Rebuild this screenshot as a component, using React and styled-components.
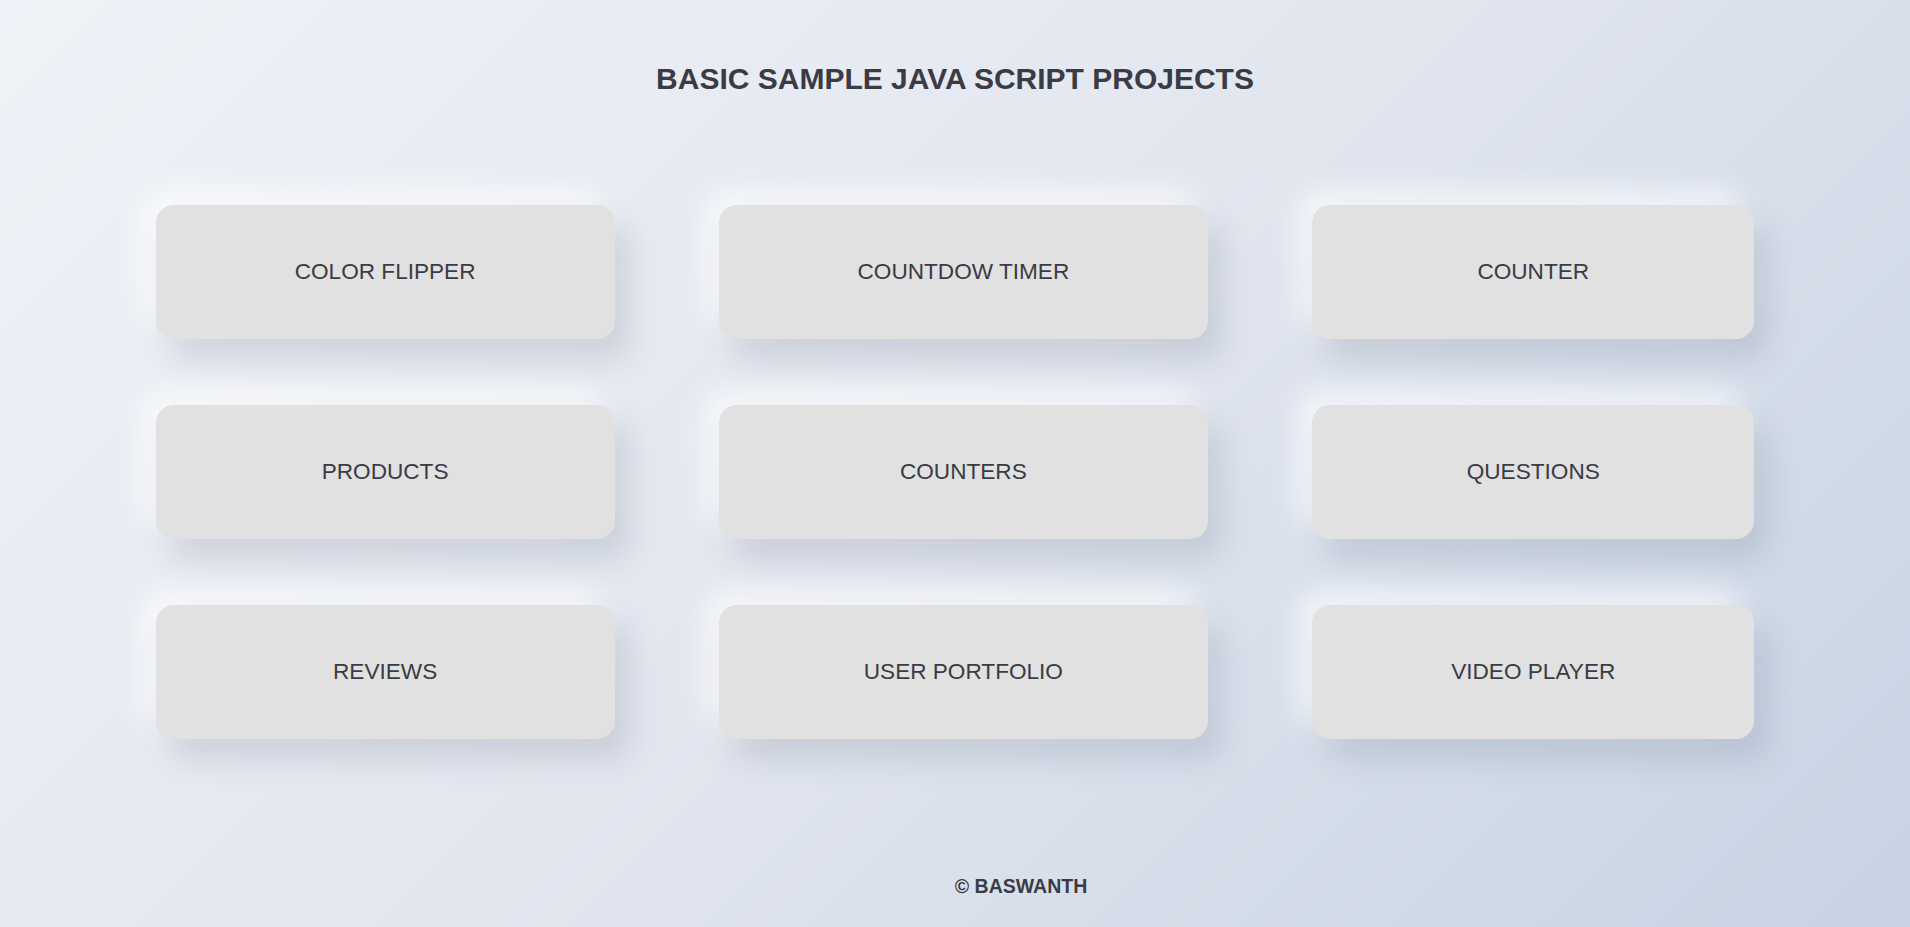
import React from 'react';
import styled, { createGlobalStyle } from 'styled-components';

const GlobalStyle = createGlobalStyle`
  html, body {
    margin: 0;
    padding: 0;
  }
  body {
    font-family: "Liberation Sans", Arial, sans-serif;
    background: linear-gradient(135deg, #eff2f7 0%, #e2e6ef 50%, #c7d3e4 100%);
    min-height: 100vh;
  }
`

const Page = styled.main`
  min-height: 100vh;
  display: flex;
  flex-direction: column;
  align-items: center;
`

const Title = styled.h1`
  margin: 61px 0 0;
  font-size: 30px;
  line-height: 36px;
  font-weight: 700;
  color: #3a3b45;
`

const Grid = styled.section`
  margin-top: 108px;
  display: grid;
  grid-template-columns: repeat(3, auto);
  justify-content: center;
  column-gap: 104px;
  row-gap: 66px;
`

const Card = styled.a`
  height: 134px;
  padding: 0 139px;
  display: flex;
  align-items: center;
  justify-content: center;
  background: #e0e1e0;
  border-radius: 18px;
  box-shadow: 14px 20px 30px rgba(80, 90, 110, 0.17), -14px -14px 30px rgba(255, 255, 255, 0.7);
  color: #3a3b45;
  font-size: 22.6px;
  text-decoration: none;
  white-space: nowrap;
  cursor: pointer;
`

const Footer = styled.footer`
  margin: 136px 0 0 132px;
  font-size: 19.5px;
  line-height: 22px;
  font-weight: 900;
  color: #3a3b45;
`

const projects = [
  'COLOR FLIPPER',
  'COUNTDOW TIMER',
  'COUNTER',
  'PRODUCTS',
  'COUNTERS',
  'QUESTIONS',
  'REVIEWS',
  'USER PORTFOLIO',
  'VIDEO PLAYER',
];

export default function App() {
  return (
    <>
      <GlobalStyle />
      <Page>
        <Title>BASIC SAMPLE JAVA SCRIPT PROJECTS</Title>
        <Grid>
          {projects.map((name) => (
            <Card key={name}>{name}</Card>
          ))}
        </Grid>
        <Footer>© BASWANTH</Footer>
      </Page>
    </>
  );
}
